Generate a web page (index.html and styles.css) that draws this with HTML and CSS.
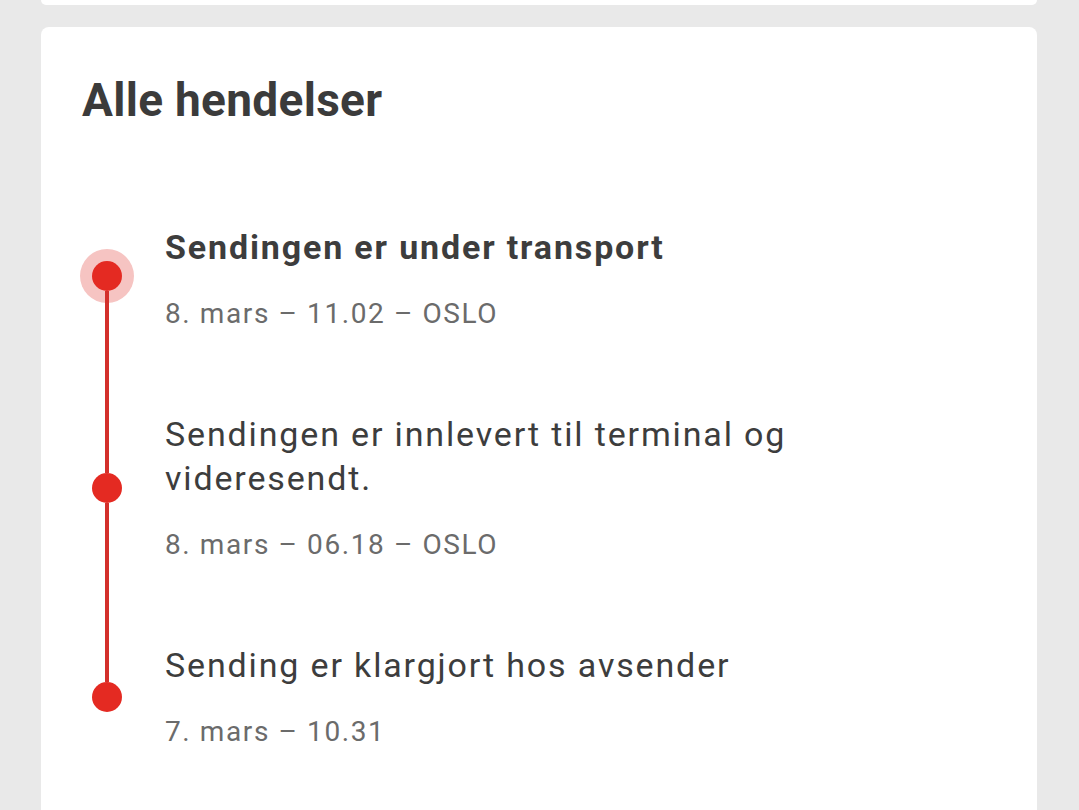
FILE: index.html
```html
<!DOCTYPE html>
<html lang="no">
<head>
    <meta charset="UTF-8">
    <meta name="viewport" content="width=device-width, initial-scale=1.0">
    <title>Alle hendelser</title>
    <link rel="stylesheet" href="styles.css">
</head>
<body>
    <div class="card card-prev"></div>

    <div class="card">
        <h2 class="card-title">Alle hendelser</h2>

        <ul class="timeline">
            <li class="event">
                <div class="marker">
                    <span class="line line-hidden"></span>
                    <span class="dot dot-active"></span>
                    <span class="line"></span>
                </div>
                <div class="event-body">
                    <div class="event-title event-title-bold">Sendingen er under transport</div>
                    <div class="event-meta">8. mars – 11.02 – OSLO</div>
                </div>
            </li>
            <li class="event">
                <div class="marker">
                    <span class="line"></span>
                    <span class="dot"></span>
                    <span class="line"></span>
                </div>
                <div class="event-body">
                    <div class="event-title">Sendingen er innlevert til terminal og videresendt.</div>
                    <div class="event-meta">8. mars – 06.18 – OSLO</div>
                </div>
            </li>
            <li class="event">
                <div class="marker">
                    <span class="line"></span>
                    <span class="dot"></span>
                    <span class="line line-hidden"></span>
                </div>
                <div class="event-body">
                    <div class="event-title">Sending er klargjort hos avsender</div>
                    <div class="event-meta">7. mars – 10.31</div>
                </div>
            </li>
        </ul>
    </div>
</body>
</html>
```

FILE: styles.css
```css
body {
    font-family: Roboto, 'Noto Sans', sans-serif;
    background-color: #e9e9e9;
    margin: 0;
    padding: 0 42px 0 41px;
    color: #3d3d3d;
}
.card {
    background: white;
    border-radius: 8px;
    padding: 45px 39px 40px;
}
.card-prev {
    height: 5px;
    padding: 0;
    border-radius: 0 0 8px 8px;
    margin-bottom: 22px;
}
.card-title {
    margin: 0;
    font-size: 46px;
    line-height: 56px;
    font-weight: 700;
    letter-spacing: 0.3px;
    color: #3b3b3b;
    padding-left: 2px;
}
.timeline {
    list-style: none;
    margin: 57px 0 0;
    padding: 0;
}
.event {
    display: flex;
    gap: 31px;
}
.marker {
    width: 54px;
    flex-shrink: 0;
    display: flex;
    flex-direction: column;
    align-items: center;
}
.line {
    flex: 1;
    width: 4px;
    background-color: #d3302b;
}
.line-hidden {
    background-color: transparent;
}
.dot {
    width: 30px;
    height: 30px;
    border-radius: 50%;
    background-color: #e42a22;
    flex-shrink: 0;
}
.dot-active {
    margin-top: -6px;
    box-shadow: 0 0 0 12px #f6c4c2;
}
.event-body {
    padding: 40px 0;
    flex: 1;
}
.event-title {
    font-size: 34px;
    line-height: 44px;
    letter-spacing: 1.85px;
    color: #3d3d3d;
    max-width: 720px;
}
.event-title-bold {
    font-weight: 700;
}
.event-meta {
    margin-top: 27px;
    font-size: 28px;
    line-height: 36px;
    letter-spacing: 1.6px;
    color: #6b6b6b;
}
```
